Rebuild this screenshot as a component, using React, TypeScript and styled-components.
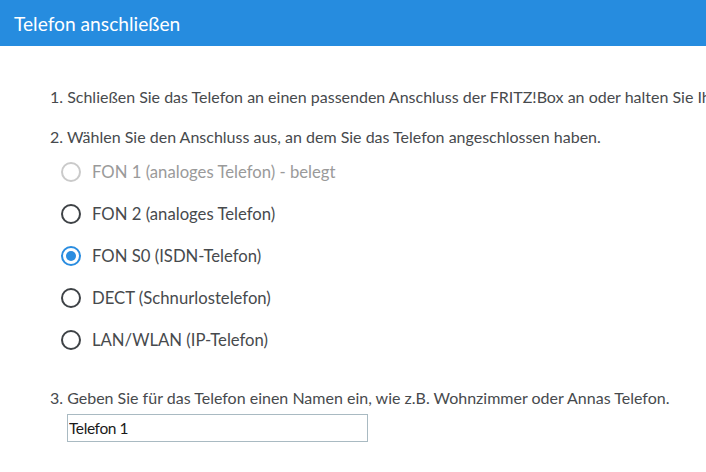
import React, { useState } from "react";
import styled, { createGlobalStyle } from "styled-components";

const GlobalStyle = createGlobalStyle`
  html, body {
    margin: 0;
    padding: 0;
    background: #ffffff;
  }
  body {
    font-family: "Lato", "Noto Sans", sans-serif;
    color: #474a4d;
    overflow: hidden;
  }
`;

type Port = {
  id: string;
  label: string;
  disabled?: boolean;
};

const ports: Port[] = [
  { id: "fon1", label: "FON 1 (analoges Telefon) - belegt", disabled: true },
  { id: "fon2", label: "FON 2 (analoges Telefon)" },
  { id: "s0", label: "FON S0 (ISDN-Telefon)" },
  { id: "dect", label: "DECT (Schnurlostelefon)" },
  { id: "lan", label: "LAN/WLAN (IP-Telefon)" },
];

const Page = styled.div`
  width: 706px;
  height: 472px;
  overflow: hidden;
`;

const Header = styled.header`
  height: 46px;
  background: #268cdf;
  display: flex;
  align-items: center;
  padding-left: 14px;
`;

const Title = styled.h1`
  margin: 0;
  font-size: 19.2px;
  font-weight: 400;
  color: #ffffff;
`;

const Content = styled.main`
  padding: 41px 0 0 50px;
  display: flex;
  flex-direction: column;
`;

const Step = styled.p<{ $gap?: number }>`
  margin: ${({ $gap }) => $gap ?? 0}px 0 0;
  font-size: 16px;
  line-height: 20px;
  white-space: nowrap;
  overflow: hidden;
`;

const RadioList = styled.div`
  display: flex;
  flex-direction: column;
  margin-top: 4px;
  padding-left: 11px;
`;

const RadioRow = styled.label<{ $disabled?: boolean }>`
  height: 42px;
  display: flex;
  align-items: center;
  gap: 11px;
  font-size: 16.7px;
  color: ${({ $disabled }) => ($disabled ? "#9a9a9a" : "#474a4d")};
  cursor: ${({ $disabled }) => ($disabled ? "default" : "pointer")};
`;

const RadioInput = styled.input`
  position: absolute;
  opacity: 0;
  width: 0;
  height: 0;
  margin: 0;
`;

const Circle = styled.span<{ $checked: boolean; $disabled?: boolean }>`
  box-sizing: border-box;
  width: 20px;
  height: 20px;
  border-radius: 50%;
  border: 2px solid
    ${({ $checked, $disabled }) =>
      $disabled ? "#cacaca" : $checked ? "#2a8de0" : "#3e4246"};
  display: flex;
  align-items: center;
  justify-content: center;
  flex-shrink: 0;

  &::after {
    content: "";
    width: 10px;
    height: 10px;
    border-radius: 50%;
    background: #2a8de0;
    display: ${({ $checked }) => ($checked ? "block" : "none")};
  }
`;

const NameInput = styled.input`
  box-sizing: border-box;
  margin: 6px 0 0 17px;
  width: 301px;
  height: 28px;
  border: 1px solid #a9bac2;
  padding: 0 1px;
  font-family: "Lato", "Noto Sans", sans-serif;
  font-size: 15.5px;
  letter-spacing: -0.4px;
  color: #1a1a1a;
  outline: none;
`;

export default function App() {
  const [selected, setSelected] = useState("s0");
  const [name, setName] = useState("Telefon 1");

  return (
    <Page>
      <GlobalStyle />
      <Header>
        <Title>Telefon anschließen</Title>
      </Header>
      <Content>
        <Step>
          1. Schließen Sie das Telefon an einen passenden Anschluss der FRITZ!Box an oder halten Sie Ihr Schnurlostelefon bereit.
        </Step>
        <Step $gap={20}>
          2. Wählen Sie den Anschluss aus, an dem Sie das Telefon angeschlossen haben.
        </Step>
        <RadioList>
          {ports.map((p) => (
            <RadioRow key={p.id} $disabled={p.disabled}>
              <RadioInput
                type="radio"
                name="port"
                value={p.id}
                disabled={p.disabled}
                checked={selected === p.id}
                onChange={() => setSelected(p.id)}
              />
              <Circle $checked={selected === p.id} $disabled={p.disabled} />
              {p.label}
            </RadioRow>
          ))}
        </RadioList>
        <Step $gap={27}>
          3. Geben Sie für das Telefon einen Namen ein, wie z.B. Wohnzimmer oder Annas Telefon.
        </Step>
        <NameInput value={name} onChange={(e) => setName(e.target.value)} />
      </Content>
    </Page>
  );
}
